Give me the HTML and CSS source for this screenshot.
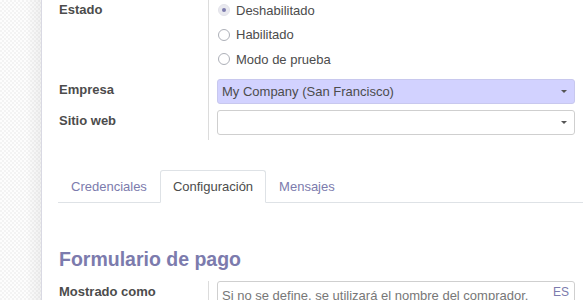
FILE: index.html
```html
<!DOCTYPE html>
<html lang="es">
<head>
<meta charset="utf-8">
<title>Formulario</title>
<link rel="stylesheet" href="styles.css">
</head>
<body>
<div class="backdrop">
  <div class="sheet">
    <div class="group group-top">
      <div class="label label-radio">Estado</div>
      <div class="field field-radios">
        <div class="radio-row"><span class="radio checked"></span><span>Deshabilitado</span></div>
        <div class="radio-row"><span class="radio"></span><span>Habilitado</span></div>
        <div class="radio-row"><span class="radio"></span><span>Modo de prueba</span></div>
      </div>
      <div class="label">Empresa</div>
      <div class="field field-gap">
        <div class="select required">My Company (San Francisco)<span class="caret"></span></div>
      </div>
      <div class="label">Sitio web</div>
      <div class="field field-last">
        <div class="select"><span class="caret"></span></div>
      </div>
    </div>

    <div class="tabs">
      <div class="tab">Credenciales</div>
      <div class="tab active">Configuración</div>
      <div class="tab">Mensajes</div>
    </div>

    <h1 class="title">Formulario de pago</h1>

    <div class="group">
      <div class="label">Mostrado como</div>
      <div class="field">
        <div class="input">
          <span class="placeholder">Si no se define, se utilizará el nombre del comprador.</span>
          <span class="lang">ES</span>
        </div>
      </div>
    </div>
  </div>
</div>
</body>
</html>
```

FILE: styles.css
```css
html, body {
  margin: 0;
  padding: 0;
}

body {
  width: 583px;
  height: 300px;
  overflow: hidden;
  font-family: "Liberation Sans", Arial, sans-serif;
  font-size: 13px;
  color: #4c4c4c;
}

.backdrop {
  display: flex;
  height: 300px;
  padding-left: 41px;
  background:
    linear-gradient(to right, rgba(255,255,255,0) 26px, rgba(0,0,0,0.05) 41px),
    repeating-conic-gradient(#f3f3f3 0 25%, #fdfdfd 0 50%) 0 0 / 4px 4px;
}

.sheet {
  flex: 1;
  background: #fff;
  border-left: 1px solid #d9d9e3;
  padding: 0 8px 0 17px;
}

.group {
  display: grid;
  grid-template-columns: 149px 1fr;
}

.group-top {
  margin-top: -2px;
}

.label {
  font-weight: bold;
  line-height: 15px;
  padding-top: 3px;
}

.label-radio {
  padding-top: 0;
  line-height: 24.5px;
}

.field {
  border-left: 1px solid #dcdcdc;
  padding-left: 8px;
}

.field-radios {
  padding-bottom: 7.5px;
}

.radio-row {
  display: flex;
  align-items: center;
  height: 24.5px;
}

.radio {
  box-sizing: border-box;
  width: 12px;
  height: 12px;
  border-radius: 50%;
  border: 1px solid #adb0b8;
  background: #fff;
  margin: 0 6px 0 1px;
  display: flex;
  align-items: center;
  justify-content: center;
}

.radio.checked {
  border-color: #e3e3ea;
  background: #e9e9ef;
}

.radio.checked::after {
  content: "";
  width: 4px;
  height: 4px;
  border-radius: 50%;
  background: #7c7bad;
}

.field-gap {
  padding-bottom: 6px;
}

.field-last {
  padding-bottom: 5px;
}

.select {
  position: relative;
  box-sizing: border-box;
  height: 25px;
  line-height: 23px;
  border: 1px solid #cfcfcf;
  border-radius: 3px;
  padding: 0 20px 0 4px;
  color: #4c4c4c;
}

.select.required {
  background: #d2d2ff;
  border-color: #c8c8ee;
}

.caret {
  position: absolute;
  right: 7px;
  top: 10px;
  width: 0;
  height: 0;
  border-left: 3.5px solid transparent;
  border-right: 3.5px solid transparent;
  border-top: 3px solid #555;
}

.tabs {
  display: flex;
  margin: 30px -8px 0 -1px;
  border-bottom: 1px solid #dee2e6;
}

.tab {
  padding: 8px 12px;
  line-height: 15px;
  border: 1px solid transparent;
  border-top-left-radius: 3px;
  border-top-right-radius: 3px;
  margin-bottom: -1px;
  color: #7c7bad;
}

.tab.active {
  color: #4c4c4c;
  background: #fff;
  border-color: #dee2e6 #dee2e6 #fff;
}

.title {
  margin: 45px 0 11px;
  font-size: 19.5px;
  line-height: 22px;
  font-weight: bold;
  color: #7c7bad;
}

.input {
  position: relative;
  box-sizing: border-box;
  height: 28px;
  border: 1px solid #cfcfcf;
  border-radius: 3px;
  padding: 0 4px;
  line-height: 25px;
}

.placeholder {
  display: block;
  padding-top: 1px;
  color: #777;
}

.lang {
  position: absolute;
  top: 3px;
  right: 5px;
  font-size: 12px;
  line-height: 14px;
  color: #7c7bad;
}
```
